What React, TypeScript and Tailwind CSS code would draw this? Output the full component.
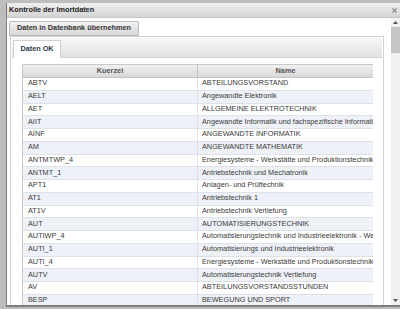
import React from 'react';

const rows: [string, string][] = [
  ['ABTV', 'ABTEILUNGSVORSTAND'],
  ['AELT', 'Angewandte Elektronik'],
  ['AET', 'ALLGEMEINE ELEKTROTECHNIK'],
  ['AIIT', 'Angewandte Informatik und fachspezifische Informationstechnik'],
  ['AINF', 'ANGEWANDTE INFORMATIK'],
  ['AM', 'ANGEWANDTE MATHEMATIK'],
  ['ANTMTWP_4', 'Energiesysteme - Werkstätte und Produktionstechnik'],
  ['ANTMT_1', 'Antriebstechnik und Mechatronik'],
  ['APT1', 'Anlagen- und Prüftechnik'],
  ['AT1', 'Antriebstechnik 1'],
  ['AT1V', 'Antriebstechnik Vertiefung'],
  ['AUT', 'AUTOMATISIERUNGSTECHNIK'],
  ['AUTIWP_4', 'Automatisierungstechnik und Industrieelektronik - Werkstätte'],
  ['AUTI_1', 'Automatisierungs und Industrieelektronik'],
  ['AUTI_4', 'Energiesysteme - Werkstätte und Produktionstechnik'],
  ['AUTV', 'Automatisierungstechnik Vertiefung'],
  ['AV', 'ABTEILUNGSVORSTANDSSTUNDEN'],
  ['BESP', 'BEWEGUNG UND SPORT'],
];

export default function App() {
  return (
    <div className="flex h-[309px] w-[400px] overflow-hidden bg-[#bdbdbd] pl-[6px] pt-[3px] font-['Liberation_Sans',Arial,sans-serif] text-[7.3px]">
      <div className="flex h-[304px] w-[394px] flex-col border-b-2 border-l border-[#7d7d7d] bg-white">
        {/* title bar */}
        <div className="flex h-[15px] shrink-0 items-center justify-between border-b border-[#c6c6c6] bg-gradient-to-b from-[#efefef] to-[#d4d4d4] pl-[2px] pr-[3px]">
          <span className="font-bold text-[#222]">Kontrolle der Imortdaten</span>
          <svg width="5" height="5" viewBox="0 0 5 5" className="mt-[1px]">
            <path d="M0.5 0.5 L4.5 4.5 M4.5 0.5 L0.5 4.5" stroke="#8a8a8a" strokeWidth="1.2" />
          </svg>
        </div>

        <div className="flex min-h-0 flex-1">
          <div className="min-w-0 flex-1 overflow-hidden pl-[2px] pt-[3px]">
            <div className="flex h-[15px] w-[130px] items-center justify-center rounded-t-[2px] border border-[#b9b9b9] bg-gradient-to-b from-[#f3f3f3] to-[#d7d7d7] font-bold text-[#333]">
              Daten in Datenbank übernehmen
            </div>

            <div className="ml-[1px] h-[300px] w-[374px] border border-[#d2d2d2] p-[1px]">
              <div className="flex h-[20px] items-end border-b border-[#d2d2d2] bg-gradient-to-b from-[#f7f7f7] to-[#e1e1e1] pl-[1px]">
                <div className="-mb-px flex h-[18px] w-[48px] items-center justify-center border border-b-0 border-[#d2d2d2] bg-white font-bold text-[#2c3a4b]">
                  Daten OK
                </div>
              </div>

              <div className="pl-[10px] pt-[6px]">
                <div className="w-[351px] overflow-hidden border-l border-t border-[#c8c8c8]">
                  <div className="grid h-[13px] grid-cols-[175px_200px] border-b border-[#c4c4c4] bg-gradient-to-b from-[#f1f1f1] to-[#d8d8d8] font-bold text-[#555]">
                    <div className="flex items-center justify-center border-r border-[#c4c4c4]">Kuerzel</div>
                    <div className="flex items-center justify-center pr-[25px]">Name</div>
                  </div>
                  {rows.map(([code, name], i) => (
                    <div
                      key={code}
                      className={`grid h-[12.75px] grid-cols-[175px_200px] border-b border-[#dde1e8] text-[#3a3a3a] ${
                        i % 2 === 1 ? 'bg-[#eef1f7]' : 'bg-white'
                      }`}
                    >
                      <div className="flex items-center border-r border-[#dde1e8] pl-[5px]">{code}</div>
                      <div className="flex items-center overflow-hidden whitespace-nowrap pl-[4px]">{name}</div>
                    </div>
                  ))}
                </div>
              </div>
            </div>
          </div>

          {/* scrollbar */}
          <div className="flex w-[9px] shrink-0 flex-col bg-[#f1f1f1]">
            <div className="flex h-[9px] items-center justify-center">
              <svg width="5" height="3" viewBox="0 0 5 3">
                <path d="M0 3 L2.5 0 L5 3 Z" fill="#555" />
              </svg>
            </div>
            <div className="h-[26px] bg-[#c6c6c6]" />
            <div className="flex-1" />
            <div className="flex h-[9px] items-center justify-center">
              <svg width="5" height="3" viewBox="0 0 5 3">
                <path d="M0 0 L2.5 3 L5 0 Z" fill="#555" />
              </svg>
            </div>
          </div>
        </div>
      </div>
    </div>
  );
}
